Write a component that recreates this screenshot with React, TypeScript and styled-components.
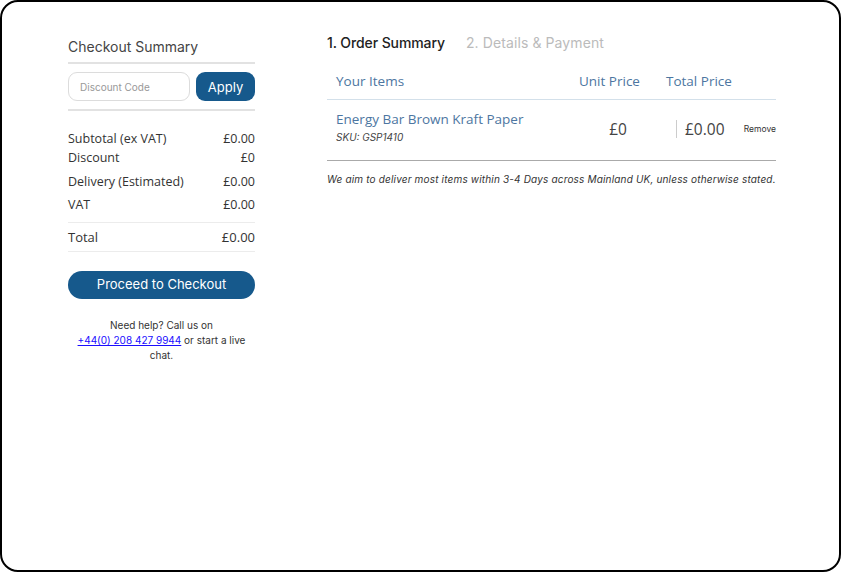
import React from 'react';
import styled, { createGlobalStyle } from 'styled-components';

const GlobalStyle = createGlobalStyle`
  html, body { margin: 0; padding: 0; background: #fff; }
  * { box-sizing: border-box; }
`;

const heading = `"Inter", "Lato", sans-serif`;
const body = `"Open Sans", "Noto Sans", sans-serif`;
const brand = '#16598c';
const steel = '#4d76a1';

const Frame = styled.div`
  width: 841px;
  height: 572px;
  border: 2px solid #000;
  border-radius: 18px;
  overflow: hidden;
  display: flex;
  gap: 72px;
  padding: 32px 0 0 66px;
`;

const Sidebar = styled.aside`
  width: 187px;
  display: flex;
  flex-direction: column;
  padding-top: 1px;
`;

const SideTitle = styled.h2`
  margin: 0;
  font-family: ${heading};
  font-weight: 400;
  font-size: 14px;
  color: #444;
  padding: 3px 0 7px;
  border-bottom: 2px solid #e2e2e2;
`;

const DiscountRow = styled.div`
  display: flex;
  gap: 6px;
  padding: 8px 0 8px;
  border-bottom: 2px solid #e2e2e2;
`;

const DiscountInput = styled.input`
  width: 122px;
  height: 29px;
  border: 1px solid #dcdcdc;
  border-radius: 9px;
  padding: 0 11px;
  font-family: ${heading};
  font-size: 10px;
  color: #333;
  outline: none;
  &::placeholder { color: #999; }
`;

const ApplyButton = styled.button`
  flex: 1;
  height: 29px;
  border: none;
  border-radius: 9px;
  background: ${brand};
  color: #fff;
  font-family: ${heading};
  font-size: 13px;
  cursor: pointer;
`;

const Totals = styled.div`
  padding-top: 18px;
  display: flex;
  flex-direction: column;
`;

const SumRow = styled.div<{ $h: number; $total?: boolean }>`
  display: flex;
  justify-content: space-between;
  align-items: center;
  height: ${p => p.$h}px;
  font-family: ${body};
  font-size: ${p => (p.$total ? 13 : 12.5)}px;
  color: #333;
  ${p => p.$total && 'margin-top: 9px; border-top: 1px solid #ececec; border-bottom: 1px solid #ececec;'}
`;

const ProceedButton = styled.button`
  margin-top: 19px;
  height: 28px;
  padding: 0 0 2px;
  border: none;
  border-radius: 14px;
  background: ${brand};
  color: #fff;
  font-family: ${heading};
  font-size: 13px;
  cursor: pointer;
`;

const Help = styled.p`
  margin: 19px 0 0;
  text-align: center;
  font-family: ${heading};
  font-size: 10px;
  line-height: 15px;
  color: #333;
  a { color: #1a0dff; }
`;

const Main = styled.main`
  width: 449px;
  display: flex;
  flex-direction: column;
`;

const Steps = styled.div`
  display: flex;
  gap: 21px;
`;

const Step = styled.span<{ $active?: boolean }>`
  font-family: ${heading};
  font-size: 14px;
  font-weight: ${p => (p.$active ? 500 : 400)};
  color: ${p => (p.$active ? '#222' : '#bbb')};
  letter-spacing: ${p => (p.$active ? '-0.1px' : '0.1px')};
`;

const Table = styled.div`
  margin-top: 11px;
  display: grid;
  grid-template-columns: 1fr 96px 110px;
`;

const HeadCell = styled.div<{ $pad?: number }>`
  height: 38px;
  display: flex;
  align-items: center;
  padding-left: ${p => p.$pad ?? 9}px;
  font-family: ${body};
  font-size: 13.5px;
  color: ${steel};
  border-bottom: 1px solid #d3e0ea;
`;

const Cell = styled.div`
  height: 61px;
  display: flex;
  align-items: center;
  border-bottom: 1.5px solid #aaa;
`;

const ItemCell = styled(Cell)`
  flex-direction: column;
  align-items: flex-start;
  justify-content: center;
  padding-left: 9px;
  padding-bottom: 4px;
`;

const ItemName = styled.a`
  font-family: ${body};
  font-size: 13.5px;
  color: ${steel};
  line-height: 19px;
`;

const Sku = styled.span`
  font-family: ${heading};
  font-style: italic;
  font-size: 10px;
  color: #444;
  line-height: 17px;
`;

const Price = styled.span`
  font-family: ${body};
  font-size: 15.5px;
  color: #444;
`;

const UnitCell = styled(Cell)`
  justify-content: center;
  padding-bottom: 2px;
`;

const TotalCell = styled(Cell)`
  padding-bottom: 2px;
  padding-left: 10px;
  justify-content: space-between;
`;

const TotalValue = styled.div`
  border-left: 1px solid #ccc;
  padding-left: 8px;
  height: 18px;
  display: flex;
  align-items: center;
`;

const Remove = styled.button`
  border: none;
  background: none;
  padding: 0;
  font-family: ${heading};
  font-size: 8.5px;
  color: #333;
  cursor: pointer;
`;

const Note = styled.p`
  margin: 12px 0 0;
  font-family: ${heading};
  font-style: italic;
  font-size: 10px;
  letter-spacing: 0.17px;
  color: #333;
`;

export default function App() {
  return (
    <>
      <GlobalStyle />
      <Frame>
        <Sidebar>
          <SideTitle>Checkout Summary</SideTitle>
          <DiscountRow>
            <DiscountInput placeholder="Discount Code" />
            <ApplyButton>Apply</ApplyButton>
          </DiscountRow>
          <Totals>
            <SumRow $h={18}><span>Subtotal (ex VAT)</span><span>£0.00</span></SumRow>
            <SumRow $h={20}><span>Discount</span><span>£0</span></SumRow>
            <SumRow $h={28}><span>Delivery (Estimated)</span><span>£0.00</span></SumRow>
            <SumRow $h={18}><span>VAT</span><span>£0.00</span></SumRow>
            <SumRow $h={30} $total><span>Total</span><span>£0.00</span></SumRow>
          </Totals>
          <ProceedButton>Proceed to Checkout</ProceedButton>
          <Help>
            Need help? Call us on<br />
            <a href="#">+44(0) 208 427 9944</a> or start a live<br />
            chat.
          </Help>
        </Sidebar>
        <Main>
          <Steps>
            <Step $active>1. Order Summary</Step>
            <Step>2. Details &amp; Payment</Step>
          </Steps>
          <Table>
            <HeadCell>Your Items</HeadCell>
            <HeadCell>Unit Price</HeadCell>
            <HeadCell $pad={0}>Total Price</HeadCell>
            <ItemCell>
              <ItemName>Energy Bar Brown Kraft Paper</ItemName>
              <Sku>SKU: GSP1410</Sku>
            </ItemCell>
            <UnitCell><Price>£0</Price></UnitCell>
            <TotalCell>
              <TotalValue><Price>£0.00</Price></TotalValue>
              <Remove>Remove</Remove>
            </TotalCell>
          </Table>
          <Note>We aim to deliver most items within 3-4 Days across Mainland UK, unless otherwise stated.</Note>
        </Main>
      </Frame>
    </>
  );
}
